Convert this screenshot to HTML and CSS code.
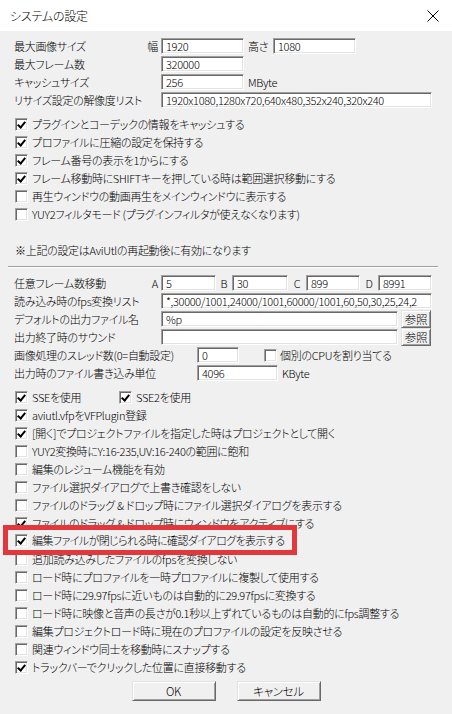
FILE: index.html
```html
<!DOCTYPE html>
<html lang="ja">
<head>
<meta charset="utf-8">
<title>システムの設定</title>
<link rel="stylesheet" href="styles.css">
</head>
<body>
<div class="window">
  <div class="titlebar">
    <span class="title">システムの設定</span>
    <svg class="close" width="12" height="12" viewBox="0 0 12 12"><path d="M0.5 0.5 L11.5 11.5 M11.5 0.5 L0.5 11.5" stroke="#000" stroke-width="1" fill="none"/></svg>
  </div>
  <div class="body">
    <div class="group top">
      <div class="row">
        <span class="lbl">最大画像サイズ<span class="key">幅</span></span>
        <span class="input w83">1920</span>
        <span class="mid">高さ</span>
        <span class="input w83">1080</span>
      </div>
      <div class="row">
        <span class="lbl">最大フレーム数</span>
        <span class="input w83">320000</span>
      </div>
      <div class="row">
        <span class="lbl">キャッシュサイズ</span>
        <span class="input w83">256</span>
        <span class="unit">MByte</span>
      </div>
      <div class="row">
        <span class="lbl">リサイズ設定の解像度リスト</span>
        <span class="input w271">1920x1080,1280x720,640x480,352x240,320x240</span>
      </div>
    </div>

    <div class="group checks1">
      <div class="row cb"><span class="box on"></span>プラグインとコーデックの情報をキャッシュする</div>
      <div class="row cb"><span class="box on"></span>プロファイルに圧縮の設定を保持する</div>
      <div class="row cb"><span class="box on"></span>フレーム番号の表示を1からにする</div>
      <div class="row cb"><span class="box on"></span>フレーム移動時にSHIFTキーを押している時は範囲選択移動にする</div>
      <div class="row cb"><span class="box"></span>再生ウィンドウの動画再生をメインウィンドウに表示する</div>
      <div class="row cb"><span class="box"></span>YUY2フィルタモード (プラグインフィルタが使えなくなります)</div>
    </div>

    <div class="row note">※上記の設定はAviUtlの再起動後に有効になります</div>

    <div class="sep"></div>

    <div class="group lower">
      <div class="row">
        <span class="lbl">任意フレーム数移動<span class="key">A</span></span>
        <span class="input w55">5</span>
        <span class="letter l16">B</span>
        <span class="input w56">30</span>
        <span class="letter l18">C</span>
        <span class="input w54">899</span>
        <span class="letter l18">D</span>
        <span class="input w54">8991</span>
      </div>
      <div class="row">
        <span class="lbl">読み込み時のfps変換リスト</span>
        <span class="input w271">*,30000/1001,24000/1001,60000/1001,60,50,30,25,24,2</span>
      </div>
      <div class="row">
        <span class="lbl">デフォルトの出力ファイル名</span>
        <span class="input w237">%p</span>
        <span class="btn small">参照</span>
      </div>
      <div class="row">
        <span class="lbl">出力終了時のサウンド</span>
        <span class="input w237"></span>
        <span class="btn small">参照</span>
      </div>
      <div class="row">
        <span class="lbl wide">画像処理のスレッド数(0=自動設定)</span>
        <span class="input w42">0</span>
        <span class="box gap25"></span><span class="cbtext">個別のCPUを割り当てる</span>
      </div>
      <div class="row">
        <span class="lbl wide">出力時のファイル書き込み単位</span>
        <span class="input w81">4096</span>
        <span class="unit">KByte</span>
      </div>
    </div>

    <div class="row cb sse">
      <span class="sse1"><span class="box on"></span>SSEを使用</span>
      <span class="box on"></span>SSE2を使用
    </div>

    <div class="group checks2">
      <div class="row cb"><span class="box on"></span>aviutl.vfpをVFPlugin登録</div>
      <div class="row cb"><span class="box on"></span>[開く]でプロジェクトファイルを指定した時はプロジェクトとして開く</div>
      <div class="row cb"><span class="box"></span>YUY2変換時にY:16-235,UV:16-240の範囲に飽和</div>
      <div class="row cb"><span class="box"></span>編集のレジューム機能を有効</div>
      <div class="row cb"><span class="box"></span>ファイル選択ダイアログで上書き確認をしない</div>
      <div class="row cb"><span class="box"></span>ファイルのドラッグ &amp; ドロップ時にファイル選択ダイアログを表示する</div>
      <div class="row cb"><span class="box on"></span>ファイルのドラッグ &amp; ドロップ時にウィンドウをアクティブにする</div>
      <div class="row cb hlrow">
        <div class="highlight">
          <span class="box on"></span><span class="hltext">編集ファイルが閉じられる時に確認ダイアログを表示する</span>
        </div>
      </div>
      <div class="row cb"><span class="box"></span>追加読み込みしたファイルのfpsを変換しない</div>
      <div class="row cb"><span class="box"></span>ロード時にプロファイルを一時プロファイルに複製して使用する</div>
      <div class="row cb"><span class="box"></span>ロード時に29.97fpsに近いものは自動的に29.97fpsに変換する</div>
      <div class="row cb"><span class="box"></span>ロード時に映像と音声の長さが0.1秒以上ずれているものは自動的にfps調整する</div>
      <div class="row cb"><span class="box"></span>編集プロジェクトロード時に現在のプロファイルの設定を反映させる</div>
      <div class="row cb"><span class="box"></span>関連ウィンドウ同士を移動時にスナップする</div>
      <div class="row cb"><span class="box on"></span>トラックバーでクリックした位置に直接移動する</div>
    </div>

    <div class="buttons">
      <span class="btn main">OK</span>
      <span class="btn main">キャンセル</span>
    </div>
  </div>
</div>
</body>
</html>
```

FILE: styles.css
```css
* { box-sizing: border-box; }

html, body {
  margin: 0;
  padding: 0;
  background: #f0f0f0;
}

body {
  font-family: "Noto Sans CJK JP", "Noto Sans", sans-serif;
  font-size: 11px;
  font-weight: 300;
  letter-spacing: -0.3px;
  font-feature-settings: "palt";
  color: #000;
}

.window {
  position: relative;
  width: 452px;
  height: 714px;
  background: #f0f0f0;
  overflow: hidden;
}

.titlebar {
  height: 31px;
  background: #fff;
  display: flex;
  align-items: center;
  padding-left: 10px;
  padding-right: 13px;
}

.title {
  font-size: 12px;
  letter-spacing: -0.2px;
  flex: 1;
}

.close {
  display: block;
}

.body {
  padding-left: 14px;
}

.row {
  height: 18px;
  display: flex;
  align-items: center;
  white-space: nowrap;
  line-height: 18px;
}

.group.top { margin-top: 6px; }
.group.checks1 { margin-top: 6px; }
.note { margin-top: 18px; padding-left: 1px; }

.sep {
  margin-top: 7px;
  margin-left: -6px;
  width: 430px;
  height: 2px;
  border-top: 1px solid #a0a0a0;
  border-bottom: 1px solid #ffffff;
}

.group.lower { margin-top: 6px; }
.sse { margin-top: 6px; }

.lbl {
  width: 147px;
  display: flex;
  flex-shrink: 0;
}

.lbl.wide { width: 183px; }

.key {
  margin-left: auto;
  margin-right: 3px;
}

.input {
  height: 16px;
  flex-shrink: 0;
  background: #fff;
  border-style: solid;
  border-width: 1px;
  border-color: #a0a0a0 #ffffff #ffffff #a0a0a0;
  box-shadow: inset 1px 1px 0 #696969, inset -1px -1px 0 #e3e3e3;
  padding: 0 3px 0 4px;
  font-size: 11px;
  letter-spacing: -0.3px;
  line-height: 14px;
  overflow: hidden;
  white-space: nowrap;
}

.w83 { width: 83px; }
.w271 { width: 271px; }
.w55 { width: 55px; }
.w56 { width: 56px; }
.w54 { width: 54px; }
.w237 { width: 237px; }
.w42 { width: 42px; }
.w81 { width: 81px; }

.mid {
  width: 29px;
  padding-left: 4px;
  flex-shrink: 0;
}

.unit {
  margin-left: 4px;
}

.letter {
  text-align: center;
  flex-shrink: 0;
}
.l16 { width: 16px; }
.l18 { width: 18px; }

.btn {
  display: flex;
  align-items: center;
  justify-content: center;
  background: #f0f0f0;
  border-style: solid;
  border-width: 1px;
  border-color: #e3e3e3 #696969 #696969 #e3e3e3;
  box-shadow: inset 1px 1px 0 #ffffff, inset -1px -1px 0 #a0a0a0;
  flex-shrink: 0;
}

.btn.small {
  width: 30px;
  height: 18px;
  margin-left: 3px;
  font-size: 11.5px;
}

.cb { padding-left: 1px; }

.box {
  width: 13px;
  height: 13px;
  flex-shrink: 0;
  margin-right: 4px;
  background: #fff;
  border-style: solid;
  border-width: 1px;
  border-color: #a0a0a0 #ffffff #ffffff #a0a0a0;
  box-shadow: inset 1px 1px 0 #696969, inset -1px -1px 0 #e3e3e3;
  position: relative;
}

.box.on::after {
  content: "";
  position: absolute;
  left: 3px;
  top: 1px;
  width: 3px;
  height: 6px;
  border-right: 2px solid #000;
  border-bottom: 2px solid #000;
  transform: rotate(40deg);
}

.box.gap25 { margin-left: 25px; margin-right: 3px; }

.sse1 {
  width: 104px;
  display: flex;
  align-items: center;
  flex-shrink: 0;
}

.buttons {
  margin-top: 5px;
  margin-left: -14px;
  display: flex;
  justify-content: center;
  gap: 21px;
}

.btn.main {
  width: 84px;
  height: 20px;
  font-size: 11.5px;
}

.hlrow {
  position: relative;
}

.highlight {
  position: absolute;
  left: -11px;
  top: -7px;
  width: 294px;
  height: 30px;
  border: 5px solid #e3383b;
  background: #f0f0f0;
  display: flex;
  align-items: center;
  padding-left: 7px;
  white-space: nowrap;
  z-index: 1;
}

.hltext {
  font-size: 11px;
  letter-spacing: -0.6px;
}
```
